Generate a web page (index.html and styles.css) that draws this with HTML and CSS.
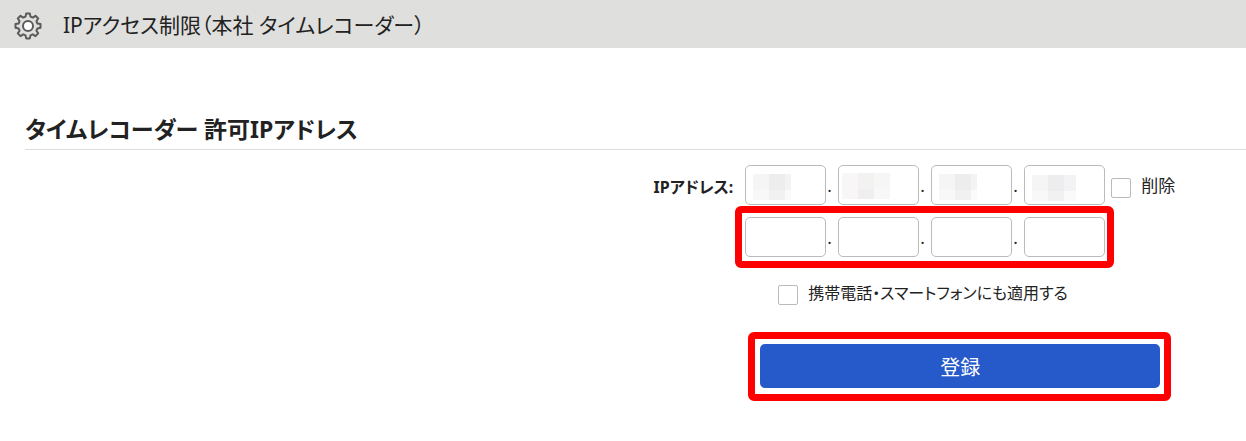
FILE: index.html
```html
<!DOCTYPE html>
<html lang="ja">

<head>
    <meta charset="UTF-8">
    <meta name="viewport" content="width=device-width, initial-scale=1.0">
    <title>IPアクセス制限</title>
    <link rel="stylesheet" href="styles.css">
</head>

<body>

    <header class="page-header">
        <svg class="gear-icon" viewBox="0 0 26 26" aria-hidden="true">
            <path d="M11.2 1.5h3.6l.7 3.1 2.3 1 2.7-1.8 2.7 2.7-1.8 2.7 1 2.3 3.1.6v3.6l-3.1.7-1 2.3 1.8 2.7-2.7 2.7-2.7-1.8-2.3 1-.7 3.1h-3.6l-.7-3.1-2.3-1-2.7 1.8-2.7-2.7 1.8-2.7-1-2.3-3.1-.7v-3.6l3.1-.6 1-2.3-1.8-2.7 2.7-2.7 2.7 1.8 2.3-1z"/>
            <circle cx="13" cy="14" r="5"/>
        </svg>
        <h1>IPアクセス制限（本社 タイムレコーダー）</h1>
    </header>

    <main class="content">
        <h2>タイムレコーダー 許可IPアドレス</h2>

        <form class="ip-form">
            <label class="ip-label" for="ip1a">IPアドレス:</label>
            <div class="fields">
                <div class="ip-row">
                    <div class="ip-address">
                        <input type="text" id="ip1a" class="octet masked" aria-label="IPアドレス1 第1">
                        <span>.</span>
                        <input type="text" class="octet masked masked-warm" aria-label="IPアドレス1 第2">
                        <span>.</span>
                        <input type="text" class="octet masked" aria-label="IPアドレス1 第3">
                        <span>.</span>
                        <input type="text" class="octet masked masked-low" aria-label="IPアドレス1 第4">
                    </div>
                    <label class="check"><input type="checkbox" name="delete"><span>削除</span></label>
                </div>

                <div class="highlight highlight-ip">
                    <div class="ip-address">
                        <input type="text" class="octet" aria-label="IPアドレス2 第1">
                        <span>.</span>
                        <input type="text" class="octet" aria-label="IPアドレス2 第2">
                        <span>.</span>
                        <input type="text" class="octet" aria-label="IPアドレス2 第3">
                        <span>.</span>
                        <input type="text" class="octet" aria-label="IPアドレス2 第4">
                    </div>
                </div>

                <label class="check check-mobile"><input type="checkbox" name="mobile"><span>携帯電話・スマートフォンにも適用する</span></label>

                <div class="highlight highlight-submit">
                    <button type="submit" class="submit-button">登録</button>
                </div>
            </div>
        </form>
    </main>

</body>

</html>
```
FILE: styles.css
```css
* {
    box-sizing: border-box;
}

body {
    margin: 0;
    background-color: #ffffff;
    color: #222222;
    font-family: "Noto Sans", "Noto Sans CJK JP", sans-serif;
    font-size: 17px;
    line-height: 24px;
    /* Proportional kana */
    font-feature-settings: "palt";
}

.page-header {
    display: flex;
    align-items: center;
    gap: 22px;
    height: 48px;
    padding: 2px 15px 0;
    background-color: #dfdfdd;
}

.gear-icon {
    width: 26px;
    height: 26px;
    overflow: visible;
    fill: none;
    stroke: #5a5a5a;
    stroke-width: 2;
    stroke-linejoin: round;
}

.gear-icon circle {
    fill: #ffffff;
}

h1 {
    margin: 0;
    font-size: 21px;
    font-weight: normal;
    line-height: 32px;
}

.content {
    padding: 64px 0 40px 25px;
}

h2 {
    margin: 0 0 15px;
    padding-bottom: 2px;
    border-bottom: 1px solid #dddddd;
    font-size: 23px;
    line-height: 35px;
}

.ip-form {
    display: grid;
    grid-template-columns: 58% 1fr;
    column-gap: 12px;
}

.ip-label {
    padding-top: 10px;
    font-size: 16px;
    font-weight: bold;
    text-align: right;
}

.ip-row {
    display: flex;
    align-items: center;
    gap: 6px;
}

.ip-address {
    display: flex;
    align-items: center;
}

.ip-address span {
    width: 12px;
    padding: 2px 0 0 1px;
}

.octet {
    width: 81px;
    height: 40px;
    padding: 0 8px;
    border: 1px solid #bbbbbb;
    border-radius: 5px;
    background-color: #ffffff;
    font: inherit;
}

.masked {
    background-image:
        linear-gradient(90deg, #f5f5f5 16px, #ededed 16px, #ededed 32px, #f3f3f5 32px),
        linear-gradient(90deg, #f8f8f8 16px, #f1f1f1 16px, #f1f1f1 32px, #fafafa 32px);
    background-repeat: no-repeat;
    background-size: 38px 16px, 38px 10px;
    background-position: 7px 8px, 7px 24px;
}

.masked-warm {
    background-image:
        linear-gradient(90deg, #f8f6f7 16px, #f2f2f0 16px, #f2f2f0 32px, #f6f6f6 32px),
        linear-gradient(90deg, #f8f6f7 16px, #efefef 16px, #efefef 32px, #f8f8f8 32px);
    background-size: 48px 16px, 48px 10px;
    background-position: 3px 7px, 3px 23px;
}

.masked-low {
    background-size: 44px 16px, 44px 10px;
    background-position: 7px 9px, 7px 25px;
}

.check {
    display: flex;
    align-items: center;
    gap: 10px;
}

.check input {
    appearance: none;
    width: 20px;
    height: 20px;
    margin: 5px 0 0;
    border: 1px solid #bbbbbb;
    border-radius: 2px;
    background-color: #ffffff;
}

.check input:checked {
    background-color: #2659c9;
}

.check span {
    padding-top: 2px;
}

.check-mobile {
    margin: 11px 0 0 33px;
    font-size: 16px;
}

/* Red frame around the parts to fill in */
.highlight {
    width: fit-content;
    border: 7px solid #ff0000;
    border-radius: 6px;
}

.highlight-ip {
    margin: 1px 0 0 -10px;
    padding: 4px 2px 4px 3px;
}

.highlight-submit {
    margin: 27px 0 0 3px;
    padding: 5px 4px 6px 5px;
}

.submit-button {
    display: block;
    width: 400px;
    height: 44px;
    padding: 4px 0 0;
    border: none;
    border-radius: 5px;
    background-color: #2659c9;
    color: #ffffff;
    font: inherit;
    font-size: 20px;
    cursor: pointer;
}

.submit-button:hover {
    background-color: #1f4bab;
}
```
